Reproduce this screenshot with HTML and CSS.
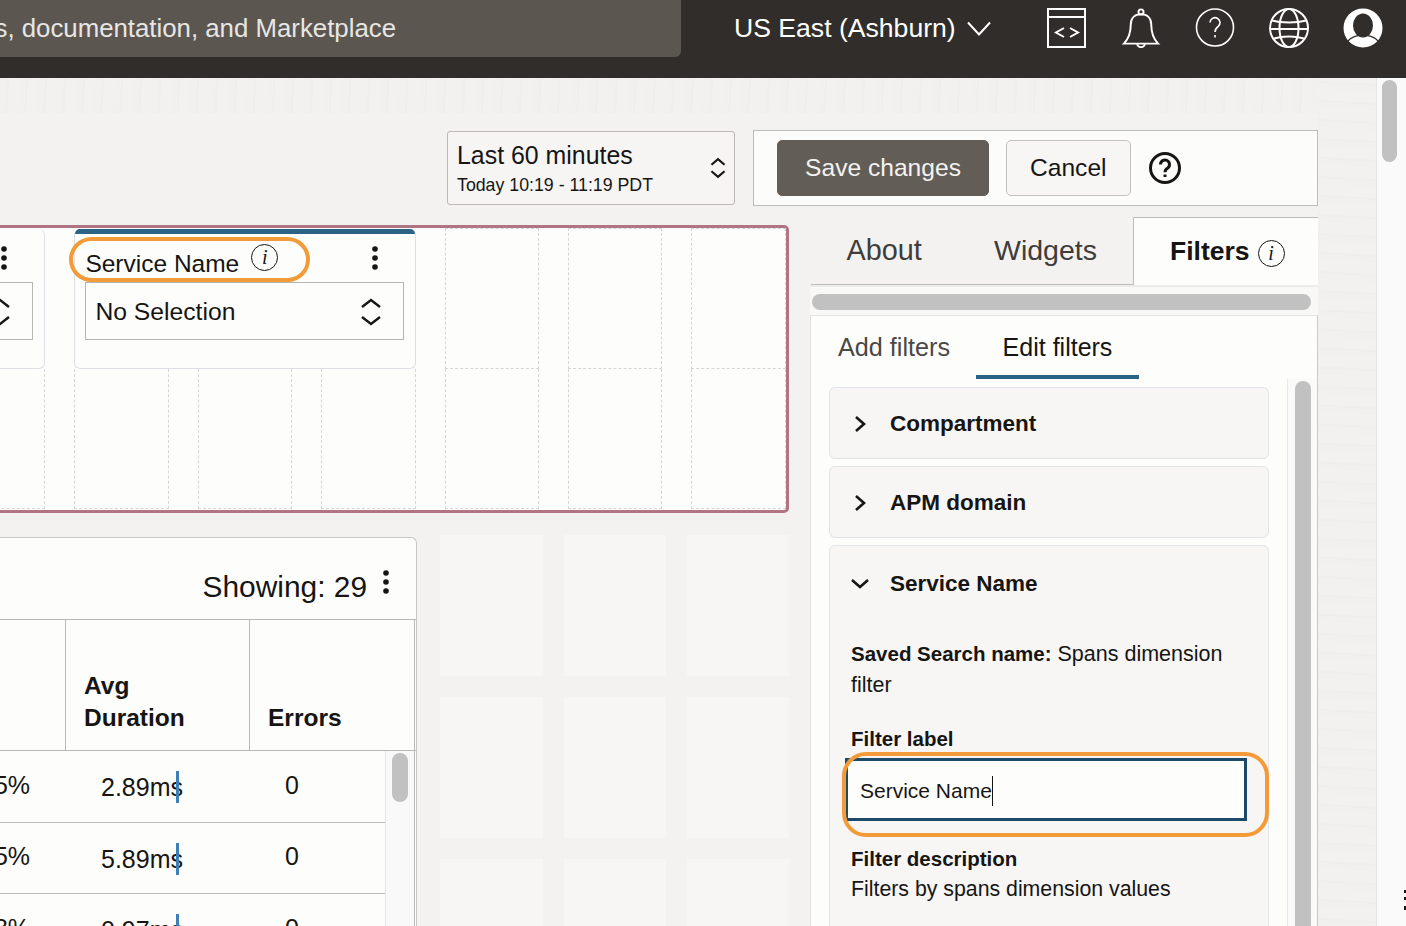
FILE: index.html
```html
<!DOCTYPE html>
<html lang="en">
<head>
    <meta charset="UTF-8">
    <meta name="viewport" content="width=device-width, initial-scale=1.0">
    <title>Edit Dashboard</title>
    <link rel="stylesheet" href="styles.css">
</head>
<body>
    <header class="topbar">
        <div class="search"><span>Search resources, services, documentation, and Marketplace</span></div>
        <div class="region">
            <span>US East (Ashburn)</span>
            <svg class="region-caret" viewBox="0 0 24 15"><path d="M1 1.5 12 13.5 23 1.5"/></svg>
        </div>
        <nav class="top-icons">
            <svg viewBox="0 0 40 40"><rect x="1" y="1" width="37" height="38"/><path d="M1 9H38M17 20 9 24.500l8 4.500M23 20 31 24.500l-8 4.500"/></svg>
            <svg viewBox="0 0 40 41"><circle cx="20" cy="4" r="2.6"/><path d="M2.5 36.5C8 31 9.500 25 9.500 17 9.500 10 14 6.500 20 6.500S30.500 10 30.500 17C30.500 25 32 31 37.500 36.500ZM16 36.500a4 3.600 0 0 0 8 0"/></svg>
            <svg viewBox="0 0 40 40"><circle cx="20" cy="19.500" r="18.500"/><path d="M15 14.500a5 5 0 1 1 8 4.200c-2 1.500-3 2.500-3 5.300M20 27v2.500"/></svg>
            <svg viewBox="0 0 40 40"><circle cx="20" cy="20" r="19"/><ellipse cx="20" cy="20" rx="9.500" ry="19"/><path d="M3 12.500C12 15 28 15 37 12.500M1 21H39M4 31C12 27.500 28 27.500 36 31"/></svg>
            <svg class="user-icon" viewBox="0 0 40 40"><circle class="user-disc" cx="20" cy="20" r="19.500"/><ellipse class="user-head" cx="20" cy="17.500" rx="10" ry="12"/><path class="user-line" d="M5 33C9 28.500 13 28 15.500 27.500M35 33C31 28.500 27 28 24.500 27.500"/></svg>
        </nav>
    </header>

    <div class="page">
        <div class="page-main">
            <div class="pattern"></div>
            <main class="workspace">
                <div class="toolbar">
                    <div class="date-range">
                        <div>
                            <div class="date-title">Last 60 minutes</div>
                            <div class="date-sub">Today 10:19 - 11:19 PDT</div>
                        </div>
                        <svg class="updown updown-small" viewBox="0 0 22 28"><path d="M2 9.500 11 2l9 7.500M2 18.500l9 7.500 9-7.500"/></svg>
                    </div>
                    <div class="save-panel">
                        <button class="btn btn-primary">Save changes</button>
                        <button class="btn">Cancel</button>
                        <svg class="save-help" viewBox="0 0 32 32"><circle cx="16" cy="16" r="14.500"/><path d="M11.500 12.500a4.500 4.500 0 1 1 7 3.700c-1.700 1.100-2.500 2-2.500 4M16 22.500v2.500"/></svg>
                    </div>
                </div>

                <div class="columns">
                    <div class="left-col">
                        <section class="board">
                            <div class="widget widget-left">
                                <div class="widget-head"><svg class="dots" viewBox="0 0 8 26"><circle cx="4" cy="4" r="2.800"/><circle cx="4" cy="13" r="2.800"/><circle cx="4" cy="22" r="2.800"/></svg></div>
                                <div class="select">
                                    <span></span>
                                    <svg class="updown" viewBox="0 0 22 28"><path d="M2 9 11 2l9 7M2 19l9 7 9-7"/></svg>
                                </div>
                            </div>
                            <div class="widget widget-active">
                                <div class="widget-head">
                                    <span class="widget-label">Service Name</span>
                                    <span class="info">i</span>
                                    <svg class="dots" viewBox="0 0 8 26"><circle cx="4" cy="4" r="2.800"/><circle cx="4" cy="13" r="2.800"/><circle cx="4" cy="22" r="2.800"/></svg>
                                </div>
                                <div class="select">
                                    <span>No Selection</span>
                                    <svg class="updown" viewBox="0 0 22 28"><path d="M2 9 11 2l9 7M2 19l9 7 9-7"/></svg>
                                </div>
                                <div class="mark mark-label"></div>
                            </div>
                            <div class="cell"></div><div class="cell"></div><div class="cell"></div>
                            <div class="cell cell-low"></div><div class="cell cell-low"></div><div class="cell cell-low"></div><div class="cell cell-low"></div>
                            <div class="cell cell-low"></div><div class="cell cell-low"></div><div class="cell cell-low"></div>
                        </section>

                        <div class="lower">
                            <section class="table-card">
                                <div class="card-head">
                                    <span class="showing">Showing: 29</span>
                                    <svg class="dots" viewBox="0 0 8 26"><circle cx="4" cy="4" r="2.800"/><circle cx="4" cy="13" r="2.800"/><circle cx="4" cy="22" r="2.800"/></svg>
                                </div>
                                <div class="table-head">
                                    <div></div>
                                    <div class="th">Avg<br>Duration</div>
                                    <div class="th th-last">Errors</div>
                                </div>
                                <div class="table-body">
                                    <div class="rows">
                                        <div class="row">
                                            <div class="td-pct">65%</div>
                                            <div class="td-dur">2.89ms<i class="tick"></i></div>
                                            <div class="td-err">0</div>
                                        </div>
                                        <div class="row">
                                            <div class="td-pct">65%</div>
                                            <div class="td-dur">5.89ms<i class="tick"></i></div>
                                            <div class="td-err">0</div>
                                        </div>
                                        <div class="row">
                                            <div class="td-pct">38%</div>
                                            <div class="td-dur">0.97ms<i class="tick"></i></div>
                                            <div class="td-err">0</div>
                                        </div>
                                    </div>
                                    <div class="table-scroll"><div class="table-thumb"></div></div>
                                </div>
                            </section>
                            <div class="placeholders">
                                <div></div><div></div><div></div>
                                <div></div><div></div><div></div>
                                <div></div><div></div><div></div>
                            </div>
                        </div>
                    </div>

                    <aside class="side">
                        <div class="tabs">
                            <div class="tab tab-about">About</div>
                            <div class="tab tab-widgets">Widgets</div>
                            <div class="tab tab-active">Filters <span class="info info-small">i</span></div>
                        </div>
                        <div class="h-scroll"><div class="h-thumb"></div></div>
                        <div class="side-body">
                            <div class="subtabs">
                                <div class="subtab subtab-add">Add filters</div>
                                <div class="subtab subtab-active">Edit filters</div>
                            </div>
                            <div class="side-scroller">
                                <div class="filter-list">
                                    <div class="filter">
                                        <div class="filter-head">
                                            <svg class="chev" viewBox="0 0 20 20"><path d="M5 3l8 7-8 7"/></svg>
                                            <span>Compartment</span>
                                        </div>
                                    </div>
                                    <div class="filter">
                                        <div class="filter-head">
                                            <svg class="chev" viewBox="0 0 20 20"><path d="M5 3l8 7-8 7"/></svg>
                                            <span>APM domain</span>
                                        </div>
                                    </div>
                                    <div class="filter filter-open">
                                        <div class="filter-head">
                                            <svg class="chev" viewBox="0 0 20 20"><path d="M1 6l8 7 8-7"/></svg>
                                            <span>Service Name</span>
                                        </div>
                                        <p class="saved"><b>Saved Search name:</b> Spans dimension filter</p>
                                        <div class="field-label">Filter label</div>
                                        <div class="input-wrap">
                                            <div class="input"><span class="caret">Service Name</span></div>
                                            <div class="mark mark-input"></div>
                                        </div>
                                        <div class="field-label field-desc">Filter description</div>
                                        <div class="desc">Filters by spans dimension values</div>
                                    </div>
                                </div>
                                <div class="list-scroll"><div class="list-thumb"></div></div>
                            </div>
                        </div>
                    </aside>
                </div>
            </main>
        </div>
        <div class="pattern-side"></div>
        <div class="page-scroll"><div class="page-thumb"></div><div class="edge-dots"></div></div>
    </div>
</body>
</html>
```

FILE: styles.css
```css
* {
    box-sizing: border-box;
}

html, body {
    height: 926px;
    overflow: hidden;
}

body {
    margin: 0;
    font-family: 'Liberation Sans', Arial, sans-serif;
    color: #161513;
    background-color: #f3f2f1;
}

/* top bar */
.topbar {
    display: flex;
    align-items: flex-start;
    height: 78px;
    background-color: #312d2a;
}

.search {
    display: flex;
    justify-content: flex-end;
    align-items: center;
    width: 681px;
    height: 57px;
    padding-right: 285px;
    overflow: hidden;
    white-space: nowrap;
    font-size: 25.8px;
    color: #e8e6e3;
    background-color: #5b5650;
    border-bottom-right-radius: 6px;
    flex-shrink: 0;
}

.region {
    display: flex;
    align-items: center;
    gap: 11px;
    width: 313px;
    height: 57px;
    margin-left: 53px;
    font-size: 26.6px;
    color: #fff;
    flex-shrink: 0;
}

.region-caret {
    width: 24px;
    height: 15px;
    fill: none;
    stroke: #fff;
    stroke-width: 2;
}

.top-icons {
    display: flex;
    gap: 34px;
    margin-top: 8px;
}

.top-icons svg {
    width: 40px;
    height: 40px;
    fill: none;
    stroke: #fff;
    stroke-width: 2;
}

.top-icons svg:nth-child(3) {
    stroke-width: 1.6;
}

.top-icons .user-icon {
    stroke: none;
}

.user-disc {
    fill: #fff;
}

.user-head {
    fill: #312d2a;
}

.user-line {
    fill: none;
    stroke: #312d2a;
    stroke-width: 1.2;
}

/* page frame */
.page {
    display: flex;
    height: 848px;
}

.page-main {
    width: 1318px;
    flex-shrink: 0;
}

.pattern {
    height: 35px;
    background: repeating-linear-gradient(93deg, #f1f0ee 0 7px, #efeeec 7px 9px, #f2f1ef 9px 19px);
}

.pattern-side {
    width: 58px;
    background: repeating-linear-gradient(3deg, #f1f0ee 0 6px, #efeeec 6px 8px, #f2f1ef 8px 19px);
}

.page-scroll {
    position: relative;
    width: 30px;
    background-color: #fafafa;
    border-left: 1px solid #e6e6e6;
}

.page-thumb {
    width: 15px;
    height: 82px;
    margin: 2px 0 0 5px;
    background-color: #c1c1c1;
    border-radius: 8px;
}

.edge-dots {
    position: absolute;
    top: 812px;
    right: 0;
    width: 2px;
    height: 20px;
    background: linear-gradient(#161513 0 3px, transparent 3px 7px, #161513 7px 10px, transparent 10px 16px, #161513 16px 20px);
}

.workspace {
    height: 813px;
    overflow: hidden;
    background-color: #f3f2f1;
}

/* toolbar */
.toolbar {
    display: flex;
    justify-content: flex-end;
    gap: 18px;
    padding-top: 17px;
}

.date-range {
    display: flex;
    align-items: center;
    justify-content: space-between;
    width: 288px;
    height: 74px;
    margin-top: 1px;
    padding: 0 8px 0 9px;
    background-color: #f6f5f4;
    border: 1px solid #bdb9b4;
    border-radius: 3px;
}

.date-title {
    font-size: 24.9px;
    line-height: 30px;
}

.date-sub {
    margin-top: 3px;
    font-size: 17.750px;
    line-height: 24px;
}

.save-panel {
    display: flex;
    align-items: center;
    width: 565px;
    height: 76px;
    padding-left: 23px;
    background-color: #fcfcfa;
    border: 1px solid #b9bdc2;
}

.btn {
    height: 56px;
    margin-right: 17px;
    padding: 0 23px;
    font-family: inherit;
    font-size: 24.6px;
    color: #161513;
    background-color: #f7f6f5;
    border: 1px solid #c4c0bb;
    border-radius: 5px;
}

.btn-primary {
    width: 212px;
    padding: 0;
    color: #f4f3f1;
    background-color: #635d57;
    border-color: #635d57;
}

.save-help {
    width: 32px;
    height: 32px;
    margin-left: 1px;
    fill: none;
    stroke: #161513;
    stroke-width: 3;
}

.columns {
    display: flex;
    gap: 21px;
    padding-top: 11px;
}

/* dashboard grid */
.left-col {
    width: 789px;
    flex-shrink: 0;
}

.board {
    display: grid;
    grid-template-columns: repeat(7, 94.4px);
    grid-template-rows: 141px 140px;
    column-gap: 29px;
    width: 849px;
    height: 288px;
    margin: 8px 0 0 -60px;
    padding-left: 8px;
    background-color: #fdfdfb;
    border: 3px solid #b07483;
    border-radius: 5px;
}

.cell {
    border: 1px dashed #d6d6d6;
}

.cell-low {
    border-top: none;
}

.widget {
    position: relative;
    margin-top: 1px;
    padding: 0 11px 0 10px;
    background-color: #fdfdfb;
    border: 1px solid #dde0e6;
    border-top: none;
    border-radius: 6px;
}

.widget-active {
    grid-column: span 3;
}

.widget-active::before {
    content: "";
    display: block;
    height: 5px;
    margin: 0 -11px 0 -10px;
    background-color: #2b6386;
    border-radius: 5px 5px 0 0;
}

.widget-left {
    padding-top: 5px;
}

.widget-head {
    display: flex;
    align-items: center;
    height: 48px;
}

.widget-label {
    margin-top: 11px;
    font-size: 24.500px;
}

.info {
    display: flex;
    align-items: center;
    justify-content: center;
    width: 27px;
    height: 27px;
    margin: 0 0 2px 12px;
    font-family: 'Liberation Serif', serif;
    font-style: italic;
    font-size: 20px;
    border: 1.5px solid #161513;
    border-radius: 50%;
}

.dots {
    width: 8px;
    height: 26px;
    margin-left: auto;
    margin-right: 25px;
    fill: #161513;
    flex-shrink: 0;
}

.select {
    display: flex;
    align-items: center;
    justify-content: space-between;
    height: 58px;
    padding: 1px 21px 0 9px;
    font-size: 24.7px;
    background-color: #fdfdfb;
    border: 1px solid #b5b5b5;
}

.updown {
    width: 22px;
    height: 28px;
    fill: none;
    stroke: #161513;
    stroke-width: 2.400;
    flex-shrink: 0;
}

.updown-small {
    width: 16px;
    height: 26px;
    stroke-width: 3;
}

.mark {
    position: absolute;
    border: 4px solid #f29b38;
    pointer-events: none;
}

.mark-label {
    top: 8px;
    left: -6px;
    width: 241px;
    height: 45px;
    border-radius: 23px;
}

.mark-input {
    top: -6px;
    left: -3px;
    width: 427px;
    height: 85px;
    border-radius: 24px;
}

/* lower row */
.lower {
    display: flex;
    gap: 23px;
    margin-top: 22px;
}

.table-card {
    width: 417px;
    height: 400px;
    margin-top: 2px;
    background-color: #fdfdfb;
    border-top: 1px solid #c8c6c3;
    border-right: 1px solid #c8c6c3;
    border-top-right-radius: 6px;
    flex-shrink: 0;
}

.card-head {
    display: flex;
    align-items: center;
    justify-content: flex-end;
    height: 81px;
    padding-top: 16px;
}

.showing {
    font-size: 29.900px;
    margin-right: 15px;
}

.card-head .dots {
    margin: 0 26px 9px 0;
}

.table-head {
    display: grid;
    grid-template-columns: 66px 184px 165px;
    height: 132px;
    border-top: 1px solid #b9b9b9;
    border-bottom: 1px solid #b9b9b9;
}

.table-head > div {
    border-right: 1px solid #b9b9b9;
}

.th {
    align-self: end;
    height: 130px;
    padding: 50px 0 0 18px;
    font-size: 24.500px;
    font-weight: bold;
    line-height: 32px;
}

.th-last {
    padding-top: 82px;
}

.table-body {
    display: flex;
    margin-right: 1px;
    border-right: 1px solid #b9b9b9;
}

.rows {
    width: 385px;
    flex-shrink: 0;
}

.row {
    display: grid;
    grid-template-columns: 66px 184px 135px;
    align-items: center;
    height: 71.500px;
    font-size: 25px;
    border-bottom: 1px solid #bdbbb8;
}

.td-pct {
    margin: -2px 0 0 -20px;
}

.td-dur {
    position: relative;
    padding-left: 35px;
    margin-top: 3px;
}

.td-err {
    padding-left: 35px;
    margin-top: -2px;
}

.tick {
    position: absolute;
    top: -2px;
    left: 110px;
    width: 3px;
    height: 32px;
    background-color: #3f7fb8;
}

.table-scroll {
    flex: 1;
    padding: 2px 0 0 6px;
    background-color: #f9f9f9;
    border-left: 1px solid #e6e6e6;
}

.table-thumb {
    width: 16px;
    height: 49px;
    background-color: #c1c1c1;
    border-radius: 8px;
}

.placeholders {
    display: grid;
    grid-template-columns: 103px 102px 102px;
    grid-auto-rows: 141px;
    gap: 21px 21px;
    margin-top: 0;
}

.placeholders div {
    background-color: #f7f6f5;
}

/* right panel */
.side {
    display: flex;
    flex-direction: column;
    width: 508px;
    flex-shrink: 0;
}

.tabs {
    display: flex;
    height: 68px;
}

.tab {
    display: flex;
    align-items: center;
    font-size: 28.500px;
    color: #3f3c39;
    border-bottom: 1px solid #bcbcbc;
}

.tab-about {
    width: 147px;
    padding-left: 35.500px;
    margin-left: 1px;
    font-size: 28.800px;
}

.tab-widgets {
    width: 175px;
    padding-left: 36px;
}

.tab-active {
    flex: 1;
    padding-left: 36px;
    font-size: 26.500px;
    font-weight: bold;
    color: #161513;
    background-color: #fdfdfb;
    border-top: 1px solid #bcbcbc;
    border-left: 1px solid #bcbcbc;
    border-bottom: none;
}

.info-small {
    width: 27px;
    height: 27px;
    margin: 4px 0 0 8px;
    font-weight: normal;
}

.h-scroll {
    height: 30px;
    padding: 7px 0 0 2px;
    background-color: #f8f8f7;
    border-top: 2px solid #ececec;
}

.h-thumb {
    width: 499px;
    height: 16px;
    background-color: #c1c1c1;
    border-radius: 8px;
}

.side-body {
    flex: 1;
    background-color: #fdfdfb;
    border-top: 1px solid #e6e6e6;
    border-left: 1px solid #e2e2e2;
    border-right: 1px solid #c9c9c9;
}

.subtabs {
    display: flex;
    height: 63px;
}

.subtab {
    display: flex;
    align-items: center;
    font-size: 25.200px;
    color: #4a4744;
}

.subtab-add {
    width: 165px;
    padding-left: 27px;
}

.subtab-active {
    justify-content: center;
    width: 163px;
    height: 63px;
    padding-top: 4px;
    font-size: 25px;
    color: #161513;
    border-bottom: 4px solid #2b6386;
}

.side-scroller {
    display: flex;
    justify-content: space-between;
}

.filter-list {
    display: flex;
    flex-direction: column;
    gap: 7px;
    width: 440px;
    margin: 8px 0 0 18px;
}

.filter {
    background-color: #f7f6f5;
    border: 1px solid #e3e4ea;
    border-radius: 6px;
    height: 72px;
}

.filter-open {
    height: 500px;
}

.filter-head {
    display: flex;
    align-items: center;
    height: 71px;
    padding-left: 21px;
    font-size: 22.500px;
    font-weight: bold;
    color: #161513;
}

.filter-open .filter-head {
    height: 74px;
    padding-top: 2px;
}

.chev {
    width: 20px;
    height: 20px;
    margin-right: 19px;
    fill: none;
    stroke: #161513;
    stroke-width: 2.600;
}

.saved {
    margin: 18px 30px 0 21px;
    font-size: 21.500px;
    line-height: 31px;
}

.saved b {
    font-size: 20.500px;
}

.field-label {
    margin: 22px 0 0 21px;
    font-size: 20.500px;
    font-weight: bold;
    line-height: 31px;
}

.field-desc {
    margin-top: 22px;
}

.desc {
    margin-left: 21px;
    font-size: 21.300px;
    line-height: 30px;
}

.input-wrap {
    position: relative;
    width: 402px;
    margin: 4px 0 0 15px;
}

.input {
    display: flex;
    align-items: center;
    height: 63px;
    padding: 2px 0 0 12px;
    font-size: 21px;
    background-color: #fdfdfb;
    border: 3px solid #1d4a68;
}

.caret {
    padding: 3px 0;
    border-right: 1px solid #161513;
}

.list-scroll {
    width: 30px;
    height: 560px;
    padding: 2px 0 0 7px;
    background-color: #fafafa;
    border-left: 1px solid #e8e8e8;
}

.list-thumb {
    width: 16px;
    height: 560px;
    background-color: #c1c1c1;
    border-radius: 8px;
}
```
